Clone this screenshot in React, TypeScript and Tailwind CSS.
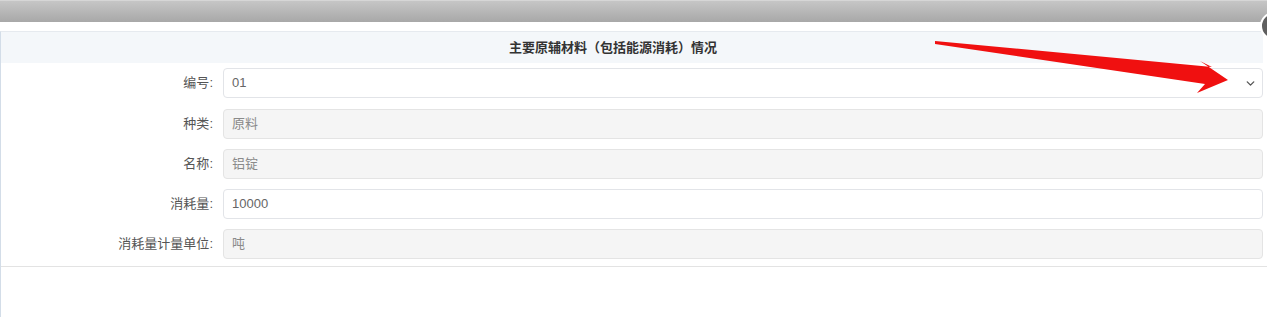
import { ChevronDown } from 'lucide-react'

interface Field {
  label: string
  value: string
  kind: 'select' | 'input' | 'readonly'
}

const fields: Field[] = [
  { label: '编号', value: '01', kind: 'select' },
  { label: '种类', value: '原料', kind: 'readonly' },
  { label: '名称', value: '铝锭', kind: 'readonly' },
  { label: '消耗量', value: '10000', kind: 'input' },
  { label: '消耗量计量单位', value: '吨', kind: 'readonly' },
]

export default function App() {
  return (
    <div
      className="relative flex h-[317px] w-full flex-col overflow-hidden bg-white text-[#333]"
      style={{ fontFamily: '"Liberation Sans", "Noto Sans CJK SC", sans-serif' }}
    >
      {/* top bar */}
      <div className="h-[22px] shrink-0 border-t border-[#d6d6d6] bg-gradient-to-b from-[#c6c6c6] to-[#a8a8a8]" />
      <div className="h-[9px] shrink-0" />

      {/* panel */}
      <div className="flex-1 border-l border-t border-[#d3dde8] border-t-[#e6eaef]">
        <div className="mr-[4px] flex h-[31px] items-center justify-center bg-[#f4f7fa] pr-[38px] text-[13px] font-bold text-[#333]">
          主要原辅材料（包括能源消耗）情况
        </div>

        <div className="mr-[4px] flex flex-col gap-[10px] pb-[7px] pt-[5px]">
          {fields.map((f, i) => (
            <div key={f.label} className={`flex items-center ${i === 1 ? 'mt-px' : ''}`}>
              <div className="w-[212px] shrink-0 text-right text-[13px] text-[#555]">
                {f.label}:
              </div>
              <div
                className={`ml-[10px] flex h-[30px] flex-1 items-center rounded-[4px] border pl-[8px] pr-[5px] text-[13px] ${
                  f.kind === 'readonly'
                    ? 'border-[#e4e4e4] bg-[#f5f5f5] text-[#8a8a8a]'
                    : 'border-[#e2e4e8] bg-white text-[#666]'
                }`}
              >
                <span className="flex-1">{f.value}</span>
                {f.kind === 'select' && <ChevronDown size={13} strokeWidth={2.5} className="text-[#555]" />}
              </div>
            </div>
          ))}
        </div>
        <div className="h-px bg-[#e3e3e3]" />
      </div>

      {/* close button, mostly off-screen */}
      <div className="absolute left-[1260px] top-[12px] h-[28px] w-[28px] rounded-full border-2 border-white bg-[#5f5f5f]" />

      {/* red annotation arrow */}
      <svg className="pointer-events-none absolute left-0 top-0" width="1267" height="317">
        <polygon
          points="935,41 1212,67 1200,61 1228,80 1197,93 1205,84 935,44"
          fill="#f01010"
        />
      </svg>
    </div>
  )
}
